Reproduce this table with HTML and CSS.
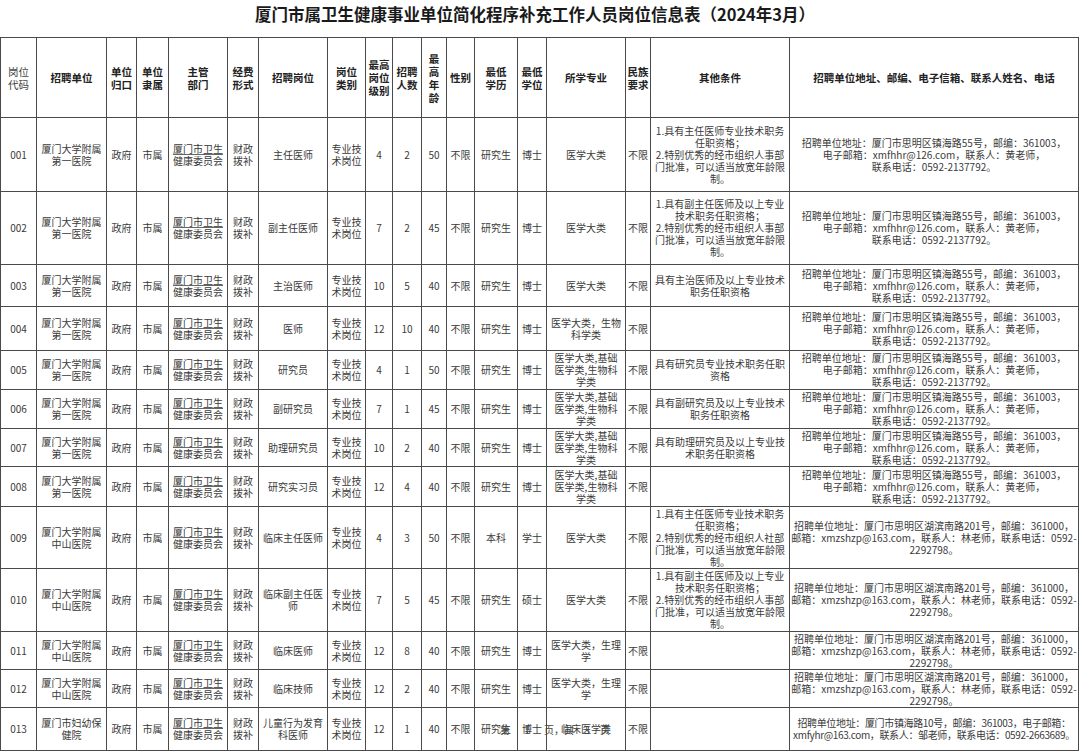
FILE: index.html
```html
<!DOCTYPE html>
<html lang="zh-CN">
<head>
<meta charset="utf-8">
<title>厦门市属卫生健康事业单位简化程序补充工作人员岗位信息表</title>
<link rel="stylesheet" href="styles.css">
</head>
<body>
<div class="page">
  <h1 class="title">厦门市属卫生健康事业单位简化程序补充工作人员岗位信息表（2024年3月）</h1>
  <table class="grid">
    <colgroup>
      <col class="c-code"><col class="c-unit"><col class="c-gk"><col class="c-ls"><col class="c-dept"><col class="c-fund"><col class="c-post"><col class="c-type"><col class="c-lvl"><col class="c-num"><col class="c-age"><col class="c-sex"><col class="c-edu"><col class="c-deg"><col class="c-major"><col class="c-eth"><col class="c-cond"><col class="c-addr">
    </colgroup>
    <thead>
      <tr class="h-head">
        <th class="light">岗位<br>代码</th>
        <th>招聘单位</th>
        <th>单位<br>归口</th>
        <th>单位<br>隶属</th>
        <th>主管<br>部门</th>
        <th>经费<br>形式</th>
        <th>招聘岗位</th>
        <th>岗位<br>类别</th>
        <th>最高<br>岗位<br>级别</th>
        <th>招聘<br>人数</th>
        <th>最<br>高<br>年<br>龄</th>
        <th>性别</th>
        <th>最低<br>学历</th>
        <th>最低<br>学位</th>
        <th>所学专业</th>
        <th>民族<br>要求</th>
        <th>其他条件</th>
        <th>招聘单位地址、邮编、电子信箱、联系人姓名、电话</th>
      </tr>
    </thead>
    <tbody>
      <tr class="h-74">
        <td>001</td><td>厦门大学附属<br>第一医院</td><td>政府</td><td>市属</td><td><span class="ul">厦门市卫生</span><br>健康委员会</td><td>财政<br>拨补</td><td>主任医师</td><td>专业技<br>术岗位</td><td>4</td><td>2</td><td>50</td><td>不限</td><td>研究生</td><td>博士</td><td>医学大类</td><td>不限</td>
        <td class="nw">1.具有主任医师专业技术职务<br>任职资格；<br>2.特别优秀的经市组织人事部<br>门批准，可以适当放宽年龄限<br>制。</td>
        <td class="nw">招聘单位地址：厦门市思明区镇海路55号，邮编：361003，<br>电子邮箱：xmfhhr@126.com，联系人：黄老师，<br>联系电话：0592-2137792。</td>
      </tr>
      <tr class="h-73">
        <td>002</td><td>厦门大学附属<br>第一医院</td><td>政府</td><td>市属</td><td><span class="ul">厦门市卫生</span><br>健康委员会</td><td>财政<br>拨补</td><td>副主任医师</td><td>专业技<br>术岗位</td><td>7</td><td>2</td><td>45</td><td>不限</td><td>研究生</td><td>博士</td><td>医学大类</td><td>不限</td>
        <td class="nw">1.具有副主任医师及以上专业<br>技术职务任职资格；<br>2.特别优秀的经市组织人事部<br>门批准，可以适当放宽年龄限<br>制。</td>
        <td class="nw">招聘单位地址：厦门市思明区镇海路55号，邮编：361003，<br>电子邮箱：xmfhhr@126.com，联系人：黄老师，<br>联系电话：0592-2137792。</td>
      </tr>
      <tr class="h-42">
        <td>003</td><td>厦门大学附属<br>第一医院</td><td>政府</td><td>市属</td><td><span class="ul">厦门市卫生</span><br>健康委员会</td><td>财政<br>拨补</td><td>主治医师</td><td>专业技<br>术岗位</td><td>10</td><td>5</td><td>40</td><td>不限</td><td>研究生</td><td>博士</td><td>医学大类</td><td>不限</td>
        <td class="nw">具有主治医师及以上专业技术<br>职务任职资格</td>
        <td class="nw">招聘单位地址：厦门市思明区镇海路55号，邮编：361003，<br>电子邮箱：xmfhhr@126.com，联系人：黄老师，<br>联系电话：0592-2137792。</td>
      </tr>
      <tr class="h-44">
        <td>004</td><td>厦门大学附属<br>第一医院</td><td>政府</td><td>市属</td><td><span class="ul">厦门市卫生</span><br>健康委员会</td><td>财政<br>拨补</td><td>医师</td><td>专业技<br>术岗位</td><td>12</td><td>10</td><td>40</td><td>不限</td><td>研究生</td><td>博士</td><td class="nw">医学大类，生物<br>科学类</td><td>不限</td>
        <td></td>
        <td class="nw">招聘单位地址：厦门市思明区镇海路55号，邮编：361003，<br>电子邮箱：xmfhhr@126.com，联系人：黄老师，<br>联系电话：0592-2137792。</td>
      </tr>
      <tr class="h-39">
        <td>005</td><td>厦门大学附属<br>第一医院</td><td>政府</td><td>市属</td><td><span class="ul">厦门市卫生</span><br>健康委员会</td><td>财政<br>拨补</td><td>研究员</td><td>专业技<br>术岗位</td><td>4</td><td>1</td><td>50</td><td>不限</td><td>研究生</td><td>博士</td><td class="nw">医学大类,基础<br>医学类,生物科<br>学类</td><td>不限</td>
        <td class="nw">具有研究员专业技术职务任职<br>资格</td>
        <td class="nw">招聘单位地址：厦门市思明区镇海路55号，邮编：361003，<br>电子邮箱：xmfhhr@126.com，联系人：黄老师，<br>联系电话：0592-2137792。</td>
      </tr>
      <tr class="h-39">
        <td>006</td><td>厦门大学附属<br>第一医院</td><td>政府</td><td>市属</td><td><span class="ul">厦门市卫生</span><br>健康委员会</td><td>财政<br>拨补</td><td>副研究员</td><td>专业技<br>术岗位</td><td>7</td><td>1</td><td>45</td><td>不限</td><td>研究生</td><td>博士</td><td class="nw">医学大类,基础<br>医学类,生物科<br>学类</td><td>不限</td>
        <td class="nw">具有副研究员及以上专业技术<br>职务任职资格</td>
        <td class="nw">招聘单位地址：厦门市思明区镇海路55号，邮编：361003，<br>电子邮箱：xmfhhr@126.com，联系人：黄老师，<br>联系电话：0592-2137792。</td>
      </tr>
      <tr class="h-38">
        <td>007</td><td>厦门大学附属<br>第一医院</td><td>政府</td><td>市属</td><td><span class="ul">厦门市卫生</span><br>健康委员会</td><td>财政<br>拨补</td><td>助理研究员</td><td>专业技<br>术岗位</td><td>10</td><td>2</td><td>40</td><td>不限</td><td>研究生</td><td>博士</td><td class="nw">医学大类,基础<br>医学类,生物科<br>学类</td><td>不限</td>
        <td class="nw">具有助理研究员及以上专业技<br>术职务任职资格</td>
        <td class="nw">招聘单位地址：厦门市思明区镇海路55号，邮编：361003，<br>电子邮箱：xmfhhr@126.com，联系人：黄老师，<br>联系电话：0592-2137792。</td>
      </tr>
      <tr class="h-40">
        <td>008</td><td>厦门大学附属<br>第一医院</td><td>政府</td><td>市属</td><td><span class="ul">厦门市卫生</span><br>健康委员会</td><td>财政<br>拨补</td><td>研究实习员</td><td>专业技<br>术岗位</td><td>12</td><td>4</td><td>40</td><td>不限</td><td>研究生</td><td>博士</td><td class="nw">医学大类,基础<br>医学类,生物科<br>学类</td><td>不限</td>
        <td></td>
        <td class="nw">招聘单位地址：厦门市思明区镇海路55号，邮编：361003，<br>电子邮箱：xmfhhr@126.com，联系人：黄老师，<br>联系电话：0592-2137792。</td>
      </tr>
      <tr class="h-62">
        <td>009</td><td>厦门大学附属<br>中山医院</td><td>政府</td><td>市属</td><td><span class="ul">厦门市卫生</span><br>健康委员会</td><td>财政<br>拨补</td><td>临床主任医师</td><td>专业技<br>术岗位</td><td>4</td><td>3</td><td>50</td><td>不限</td><td>本科</td><td>学士</td><td>医学大类</td><td>不限</td>
        <td class="nw">1.具有主任医师专业技术职务<br>任职资格；<br>2.特别优秀的经市组织人社部<br>门批准，可以适当放宽年龄限<br>制。</td>
        <td class="nw">招聘单位地址：厦门市思明区湖滨南路201号，邮编：361000，<br>邮箱：xmzshzp@163.com，联系人：林老师，联系电话：0592-<br>2292798。</td>
      </tr>
      <tr class="h-63">
        <td>010</td><td>厦门大学附属<br>中山医院</td><td>政府</td><td>市属</td><td><span class="ul">厦门市卫生</span><br>健康委员会</td><td>财政<br>拨补</td><td>临床副主任医<br>师</td><td>专业技<br>术岗位</td><td>7</td><td>5</td><td>45</td><td>不限</td><td>研究生</td><td>硕士</td><td>医学大类</td><td>不限</td>
        <td class="nw">1.具有副主任医师及以上专业<br>技术职务任职资格；<br>2.特别优秀的经市组织人事部<br>门批准，可以适当放宽年龄限<br>制。</td>
        <td class="nw">招聘单位地址：厦门市思明区湖滨南路201号，邮编：361000，<br>邮箱：xmzshzp@163.com，联系人：林老师，联系电话：0592-<br>2292798。</td>
      </tr>
      <tr class="h-38">
        <td>011</td><td>厦门大学附属<br>中山医院</td><td>政府</td><td>市属</td><td><span class="ul">厦门市卫生</span><br>健康委员会</td><td>财政<br>拨补</td><td>临床医师</td><td>专业技<br>术岗位</td><td>12</td><td>8</td><td>40</td><td>不限</td><td>研究生</td><td>博士</td><td class="nw">医学大类，生理<br>学</td><td>不限</td>
        <td></td>
        <td class="nw">招聘单位地址：厦门市思明区湖滨南路201号，邮编：361000，<br>邮箱：xmzshzp@163.com，联系人：林老师，联系电话：0592-<br>2292798。</td>
      </tr>
      <tr class="h-38">
        <td>012</td><td>厦门大学附属<br>中山医院</td><td>政府</td><td>市属</td><td><span class="ul">厦门市卫生</span><br>健康委员会</td><td>财政<br>拨补</td><td>临床技师</td><td>专业技<br>术岗位</td><td>12</td><td>2</td><td>40</td><td>不限</td><td>研究生</td><td>博士</td><td class="nw">医学大类，生理<br>学</td><td>不限</td>
        <td></td>
        <td class="nw">招聘单位地址：厦门市思明区湖滨南路201号，邮编：361000，<br>邮箱：xmzshzp@163.com，联系人：林老师，联系电话：0592-<br>2292798。</td>
      </tr>
      <tr class="h-43">
        <td>013</td><td>厦门市妇幼保<br>健院</td><td>政府</td><td>市属</td><td><span class="ul">厦门市卫生</span><br>健康委员会</td><td>财政<br>拨补</td><td>儿童行为发育<br>科医师</td><td>专业技<br>术岗位</td><td>12</td><td>1</td><td>40</td><td>不限</td><td>研究生</td><td>博士</td><td>临床医学类</td><td>不限</td>
        <td></td>
        <td class="nw tight">招聘单位地址：厦门市镇海路10号，邮编：361003，电子邮箱：<br>xmfyhr@163.com，联系人：邹老师，联系电话：0592-2663689。</td>
      </tr>
    </tbody>
  </table>
  <div class="footer">第 <span class="gap">1</span> 页，共 3 页</div>
</div>
</body>
</html>
```

FILE: styles.css
```css
html, body {
  margin: 0;
  padding: 0;
  background: #ffffff;
}

body {
  font-family: "Noto Sans CJK SC", "Noto Sans", sans-serif;
  color: #3a3a3a;
}

.page {
  position: relative;
  width: 1080px;
  height: 753px;
  overflow: hidden;
}

.title {
  margin: 0;
  height: 37px;
  line-height: 29px;
  padding-right: 10px;
  text-align: center;
  font-size: 16.5px;
  font-weight: 700;
  color: #1a1a1a;
}

.grid {
  border-collapse: collapse;
  table-layout: fixed;
  width: 1078px;
  margin-left: 0;
  font-size: 10px;
  line-height: 12px;
}

.grid th,
.grid td {
  border: 1px solid #4a4a4a;
  padding: 0 1px;
  text-align: center;
  vertical-align: middle;
  overflow: visible;
}

.grid th {
  font-size: 10.5px;
  line-height: 13px;
  font-weight: 700;
  color: #222;
}

.grid th.light {
  font-weight: 400;
  color: #444;
}

.nw {
  white-space: nowrap;
}

.tight {
  letter-spacing: -0.35px;
}

.ul {
  text-decoration: underline;
  text-decoration-color: #666;
  text-underline-offset: 1px;
}

.c-code { width: 36px; }
.c-unit { width: 70px; }
.c-gk { width: 30px; }
.c-ls { width: 32px; }
.c-dept { width: 59px; }
.c-fund { width: 31px; }
.c-post { width: 69px; }
.c-type { width: 38px; }
.c-lvl { width: 27px; }
.c-num { width: 29px; }
.c-age { width: 25px; }
.c-sex { width: 28px; }
.c-edu { width: 43px; }
.c-deg { width: 29px; }
.c-major { width: 79px; }
.c-eth { width: 25px; }
.c-cond { width: 139px; }
.c-addr { width: 289px; }

.h-head { height: 80px; }
.h-74 { height: 74px; }
.h-73 { height: 73px; }
.h-42 { height: 42px; }
.h-44 { height: 44px; }
.h-39 { height: 39px; }
.h-38 { height: 38px; }
.h-40 { height: 40px; }
.h-62 { height: 62px; }
.h-63 { height: 63px; }
.h-43 { height: 43px; }

.footer {
  position: absolute;
  left: 500px;
  top: 724px;
  font-size: 10px;
  line-height: 12px;
  color: #444;
  white-space: nowrap;
  word-spacing: 8px;
}

.footer .gap {
  margin: 0 4px;
}
```
